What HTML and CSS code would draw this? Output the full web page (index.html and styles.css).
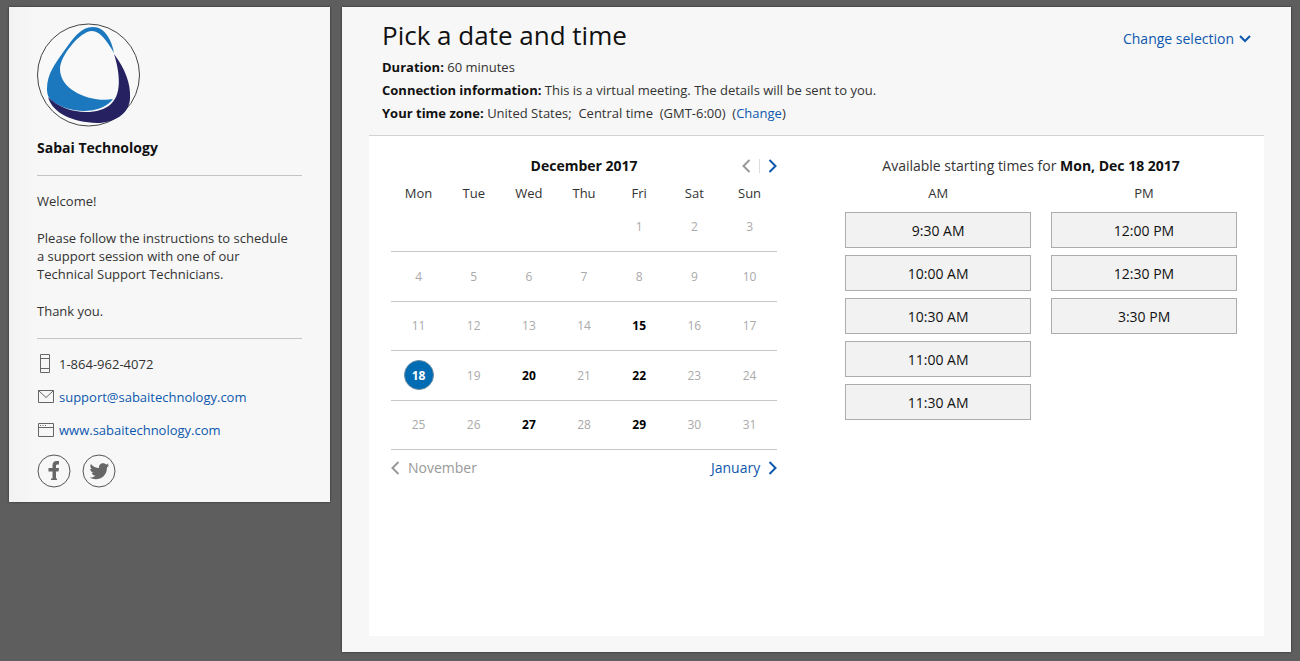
FILE: index.html
```
<!DOCTYPE html>
<html lang="en">
<head>
    <meta charset="UTF-8">
    <meta name="viewport" content="width=device-width, initial-scale=1.0">
    <title>Sabai Technology - Pick a date and time</title>
    <link rel="stylesheet" href="styles.css">
</head>
<body>

    <aside class="sidebar">
        <svg class="logo" viewBox="0 0 104 104" aria-label="Sabai Technology logo">
            <circle cx="51.500" cy="52" r="51" fill="#f9f9f9" stroke="#444" stroke-width="1"/>
            <path fill="#1b78be" d="M77 30 C74 15 67 4 56 4 C44 4 37 14 27 28 C18 41 10 51 10 66 C10 72 12 75 15 78 C34 92 65 91 76 76 C55 80 23 68 23 46 C23 33 43 8 55 8 C63 8 70 18 77 30 Z"/>
            <path fill="#262262" d="M77 31 C88 46 94 60 93 76 C92 91 77 100 60 100 C36 99 16 91 11 74 C27 91 60 94 74 81 C86 70 82 47 77 31 Z"/>
        </svg>
        <h2>Sabai Technology</h2>

        <div class="welcome">
            <p>Welcome!</p>
            <p>Please follow the instructions to schedule a support session with one of our Technical Support Technicians.</p>
            <p>Thank you.</p>
        </div>

        <ul class="contact">
            <li>
                <svg viewBox="0 0 18 20"><path d="M3.500 .5h9v18h-9zM3.500 4.500h9M3.500 14.500h9"/></svg>
                <span>1-864-962-4072</span>
            </li>
            <li>
                <svg viewBox="0 0 18 20"><path d="M1.500 3.500h15v12h-15zM1.500 3.500l7.500 7 7.500-7"/></svg>
                <a href="mailto:support@sabaitechnology.com">support@sabaitechnology.com</a>
            </li>
            <li>
                <svg viewBox="0 0 18 20"><path d="M1.500 3.500h15v13h-15zM1.500 7.500h15M3 5.500h1M5.500 5.500h1M8 5.500h1"/></svg>
                <a href="http://www.sabaitechnology.com">www.sabaitechnology.com</a>
            </li>
        </ul>

        <div class="social">
            <a href="#" aria-label="Facebook">
                <svg viewBox="0 0 34 34">
                    <circle cx="17" cy="17" r="16"/>
                    <path d="M14 26v-1.500h1.500V17.500H11.500V14h4v-2.500C15.500 8.500 17 7 19.500 7h2.500v3.500h-1.500c-1 0-1.500.5-1.500 1.500v2H22l-.5 3.500H19v7h1V26z"/>
                </svg>
            </a>
            <a href="#" aria-label="Twitter">
                <svg viewBox="0 0 34 34">
                    <circle cx="17" cy="17" r="16"/>
                    <path d="M27 11c-.7.300-1.400.5-2 .6.8-.5 1.300-1.100 1.600-2-.8.500-1.600.8-2.500 1-1.800-1.900-4.600-1.900-6.100 0-.9 1-1.200 2.200-.9 3.500-3.300-.2-6.200-1.700-8.200-4.200-1.100 2-.5 4.200 1.200 5.400-.7 0-1.300-.2-1.900-.5 0 2 1.400 3.600 3.300 4.100-.6.200-1.200.2-1.800.1.500 1.600 2 2.700 3.700 2.800-1.600 1.300-3.600 1.900-5.700 1.700 7 4.300 17.300.4 17.300-10 .8-.600 1.500-1.300 2-2.500z"/>
                </svg>
            </a>
        </div>
    </aside>

    <main class="booking">
        <header class="booking-header">
            <div>
                <h1>Pick a date and time</h1>
                <p><strong>Duration:</strong> 60 minutes</p>
                <p><strong>Connection information:</strong> This is a virtual meeting. The details will be sent to you.</p>
                <p><strong>Your time zone:</strong> United States;&nbsp; Central time&nbsp; (GMT-6:00)&nbsp; (<a href="#">Change</a>)</p>
            </div>
            <button type="button" class="change-selection">
                Change selection
                <svg viewBox="0 0 12 8"><path d="M1 1l5 5 5-5"/></svg>
            </button>
        </header>

        <div class="panel">
            <section class="calendar">
                <div class="month-bar">
                    <h3>December 2017</h3>
                    <div class="arrows">
                        <button type="button" class="prev" aria-label="Previous month" disabled>
                            <svg viewBox="0 0 9 14"><path d="M7.500 1L1.500 7l6 6"/></svg>
                        </button>
                        <button type="button" class="next" aria-label="Next month">
                            <svg viewBox="0 0 9 14"><path d="M1.500 1l6 6-6 6"/></svg>
                        </button>
                    </div>
                </div>
                <table>
                    <thead>
                        <tr><th>Mon</th><th>Tue</th><th>Wed</th><th>Thu</th><th>Fri</th><th>Sat</th><th>Sun</th></tr>
                    </thead>
                    <tbody>
                        <tr><td></td><td></td><td></td><td></td><td>1</td><td>2</td><td>3</td></tr>
                        <tr><td>4</td><td>5</td><td>6</td><td>7</td><td>8</td><td>9</td><td>10</td></tr>
                        <tr><td>11</td><td>12</td><td>13</td><td>14</td><td><button type="button">15</button></td><td>16</td><td>17</td></tr>
                        <tr><td><button type="button" class="selected">18</button></td><td>19</td><td><button type="button">20</button></td><td>21</td><td><button type="button">22</button></td><td>23</td><td>24</td></tr>
                        <tr><td>25</td><td>26</td><td><button type="button">27</button></td><td>28</td><td><button type="button">29</button></td><td>30</td><td>31</td></tr>
                    </tbody>
                </table>
                <div class="month-nav">
                    <button type="button" class="prev" disabled>
                        <svg viewBox="0 0 9 14"><path d="M7.500 1L1.500 7l6 6"/></svg>
                        November
                    </button>
                    <button type="button" class="next">
                        January
                        <svg viewBox="0 0 9 14"><path d="M1.500 1l6 6-6 6"/></svg>
                    </button>
                </div>
            </section>

            <section class="times">
                <p class="times-title">Available starting times for <strong>Mon, Dec 18 2017</strong></p>
                <div class="time-columns">
                    <div class="time-column">
                        <h4>AM</h4>
                        <button type="button">9:30 AM</button>
                        <button type="button">10:00 AM</button>
                        <button type="button">10:30 AM</button>
                        <button type="button">11:00 AM</button>
                        <button type="button">11:30 AM</button>
                    </div>
                    <div class="time-column">
                        <h4>PM</h4>
                        <button type="button">12:00 PM</button>
                        <button type="button">12:30 PM</button>
                        <button type="button">3:30 PM</button>
                    </div>
                </div>
            </section>
        </div>
    </main>

</body>
</html>
```
FILE: styles.css
```
* {
    box-sizing: border-box;
}

body {
    font-family: "Open Sans", Arial, sans-serif;
    font-size: 13px;
    color: #333;
    margin: 0;
    padding: 7px 9px 9px;
    background-color: #5e5e5e;
    display: flex;
    align-items: flex-start;
    gap: 12px;
    min-height: 100vh;
}

h1, h2, h3, h4, p, ul {
    margin: 0;
    padding: 0;
}

a {
    color: #0d57ae;
    text-decoration: none;
}

strong, h2, h3 {
    font-weight: 700;
    color: #111;
}

button {
    font: inherit;
    color: inherit;
    background: none;
    border: none;
    padding: 0;
    cursor: pointer;
}

svg {
    display: block;
    flex: none;
}

/* left column */
.sidebar {
    flex: 0 0 321px;
    padding: 16px 28px 14px;
    background: linear-gradient(to right, #f2f2f2, #f7f7f7 28px);
    box-shadow: 0 0 2px rgba(0, 0, 0, 0.6);
}

.logo {
    width: 104px;
    height: 104px;
}

.sidebar h2 {
    font-size: 14px;
    line-height: 20px;
    margin-top: 11px;
}

.welcome {
    display: flex;
    flex-direction: column;
    gap: 19px;
    margin-top: 17px;
    padding: 16px 0 18px;
    border-top: 1px solid #c4c4c4;
    border-bottom: 1px solid #c4c4c4;
    line-height: 18px;
}

.welcome p {
    max-width: 260px;
}

.contact {
    list-style: none;
    display: flex;
    flex-direction: column;
    gap: 13px;
    padding-top: 15px;
}

.contact li {
    display: flex;
    align-items: center;
    gap: 4px;
    line-height: 20px;
}

.contact svg {
    width: 18px;
    height: 20px;
    fill: none;
    stroke: #666;
}

.social {
    display: flex;
    gap: 11px;
    margin-top: 14px;
}

.social svg {
    width: 34px;
    height: 34px;
    fill: #666;
}

.social circle {
    fill: none;
    stroke: #555;
}

/* right column */
.booking {
    flex: 1;
    display: flex;
    flex-direction: column;
    align-self: stretch;
    padding: 0 27px 16px;
    background-color: #f7f7f7;
    box-shadow: 0 0 2px rgba(0, 0, 0, 0.6);
}

.booking-header {
    display: flex;
    justify-content: space-between;
    align-items: flex-start;
    padding: 12px 13px 10px;
    border-bottom: 1px solid #d2d2d2;
    line-height: 23px;
}

h1 {
    font-size: 26px;
    line-height: 32px;
    font-weight: 400;
    color: #111;
    margin-bottom: 5px;
}

.change-selection {
    display: flex;
    align-items: center;
    gap: 5px;
    margin-top: 8px;
    font-size: 14px;
    color: #0d57ae;
}

.change-selection svg {
    width: 12px;
    height: 8px;
}

.change-selection path,
.prev path,
.next path {
    fill: none;
    stroke: currentColor;
    stroke-width: 2;
}

.panel {
    flex: 1;
    display: grid;
    grid-template-columns: 69fr 70fr;
    gap: 68px;
    padding: 19px 27px 40px 22px;
    background-color: #fff;
}

.month-bar {
    display: grid;
    grid-template-columns: 1fr auto 1fr;
    align-items: center;
}

.month-bar h3 {
    grid-column: 2;
    font-size: 14px;
    line-height: 22px;
}

.arrows {
    display: flex;
    justify-content: flex-end;
}

.arrows button + button {
    margin-left: 8px;
    padding-left: 8px;
    border-left: 1px solid #ddd;
}

.prev svg,
.next svg {
    width: 9px;
    height: 14px;
}

.prev {
    color: #999;
}

.next {
    color: #0d57ae;
}

table {
    width: 100%;
    height: 273px;
    table-layout: fixed;
    border-collapse: collapse;
    text-align: center;
}

th, td {
    padding: 0;
}

th {
    height: 25px;
    vertical-align: bottom;
    font-weight: 400;
}

td {
    height: 49px;
    border-bottom: 1px solid #c8c8c8;
    color: #aaa;
    font-size: 12px;
}

td button {
    width: 30px;
    height: 30px;
    border-radius: 50%;
    font-weight: 700;
    color: #000;
}

td .selected {
    background-color: #006cb4;
    border: 1px solid #6c8ba5;
    color: #fff;
}

.month-nav {
    display: flex;
    justify-content: space-between;
    margin-top: 8px;
    font-size: 14px;
    line-height: 20px;
}

.month-nav button {
    display: flex;
    align-items: center;
    gap: 8px;
}

.times {
    text-align: center;
}

.times-title {
    padding-right: 20px;
    font-size: 14px;
    line-height: 22px;
}

.time-columns {
    display: flex;
    align-items: flex-start;
    gap: 20px;
}

.time-column {
    flex: 1;
    display: flex;
    flex-direction: column;
    gap: 7px;
}

h4 {
    font-size: 13px;
    line-height: 20px;
    font-weight: 400;
    margin: 6px 0 2px;
}

.time-column button {
    height: 36px;
    border: 1px solid #adadad;
    background-color: #f2f2f2;
    font-size: 14px;
    color: #111;
}

.time-column button:hover {
    background-color: #e6e6e6;
}
```
